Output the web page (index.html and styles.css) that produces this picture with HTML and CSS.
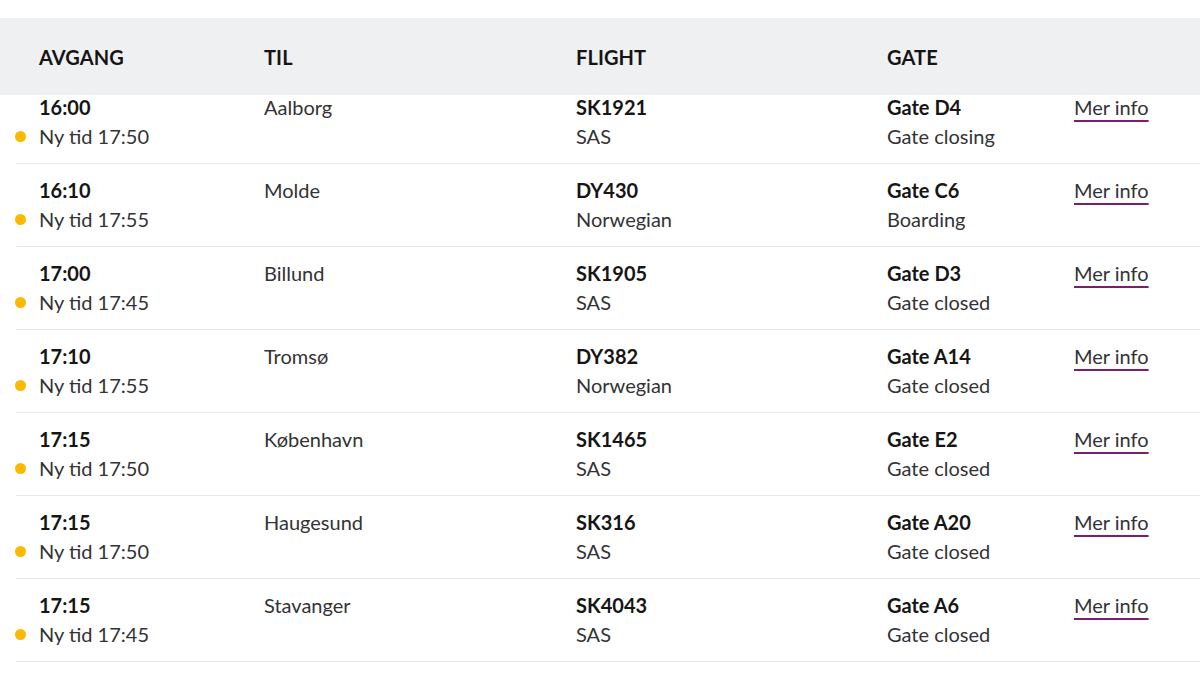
FILE: index.html
```html
<!DOCTYPE html>
<html lang="no">
<head>
<meta charset="utf-8">
<title>Avganger</title>
<link rel="stylesheet" href="styles.css">
</head>
<body>
<div class="board">
  <div class="head">
    <div>AVGANG</div>
    <div>TIL</div>
    <div>FLIGHT</div>
    <div>GATE</div>
    <div></div>
  </div>
  <div class="rows">
    <div class="row">
      <div><div class="b">16:00</div><div class="new"><span class="dot"></span>Ny tid 17:50</div></div>
      <div>Aalborg</div>
      <div><div class="b">SK1921</div><div>SAS</div></div>
      <div><div class="b">Gate D4</div><div>Gate closing</div></div>
      <div><a class="more" href="#">Mer info</a></div>
    </div>
    <div class="row">
      <div><div class="b">16:10</div><div class="new"><span class="dot"></span>Ny tid 17:55</div></div>
      <div>Molde</div>
      <div><div class="b">DY430</div><div>Norwegian</div></div>
      <div><div class="b">Gate C6</div><div>Boarding</div></div>
      <div><a class="more" href="#">Mer info</a></div>
    </div>
    <div class="row">
      <div><div class="b">17:00</div><div class="new"><span class="dot"></span>Ny tid 17:45</div></div>
      <div>Billund</div>
      <div><div class="b">SK1905</div><div>SAS</div></div>
      <div><div class="b">Gate D3</div><div>Gate closed</div></div>
      <div><a class="more" href="#">Mer info</a></div>
    </div>
    <div class="row">
      <div><div class="b">17:10</div><div class="new"><span class="dot"></span>Ny tid 17:55</div></div>
      <div>Tromsø</div>
      <div><div class="b">DY382</div><div>Norwegian</div></div>
      <div><div class="b">Gate A14</div><div>Gate closed</div></div>
      <div><a class="more" href="#">Mer info</a></div>
    </div>
    <div class="row">
      <div><div class="b">17:15</div><div class="new"><span class="dot"></span>Ny tid 17:50</div></div>
      <div>København</div>
      <div><div class="b">SK1465</div><div>SAS</div></div>
      <div><div class="b">Gate E2</div><div>Gate closed</div></div>
      <div><a class="more" href="#">Mer info</a></div>
    </div>
    <div class="row">
      <div><div class="b">17:15</div><div class="new"><span class="dot"></span>Ny tid 17:50</div></div>
      <div>Haugesund</div>
      <div><div class="b">SK316</div><div>SAS</div></div>
      <div><div class="b">Gate A20</div><div>Gate closed</div></div>
      <div><a class="more" href="#">Mer info</a></div>
    </div>
    <div class="row">
      <div><div class="b">17:15</div><div class="new"><span class="dot"></span>Ny tid 17:45</div></div>
      <div>Stavanger</div>
      <div><div class="b">SK4043</div><div>SAS</div></div>
      <div><div class="b">Gate A6</div><div>Gate closed</div></div>
      <div><a class="more" href="#">Mer info</a></div>
    </div>
  </div>
</div>
</body>
</html>
```
FILE: styles.css
```css
html, body {
  margin: 0;
  padding: 0;
  background: #ffffff;
}
body {
  font-family: Lato, "Open Sans", "Liberation Sans", sans-serif;
  font-size: 20px;
  color: #333335;
  overflow: hidden;
}
.board {
  padding-top: 18px;
}
.head,
.row {
  display: grid;
  grid-template-columns: 225px 312px 311px 187px 1fr;
}
.head {
  height: 77px;
  align-items: center;
  background: #eff0f2;
  padding-left: 39px;
  font-weight: 700;
  color: #151515;
  letter-spacing: 0.1px;
}
.rows {
  margin-left: 16px;
}
.row {
  padding: 12px 0 12px 23px;
  line-height: 29px;
  border-bottom: 1px solid #e8e8ea;
}
.row:first-child {
  padding-top: 0;
  padding-bottom: 12px;
  margin-top: -2px;
}
.b {
  font-weight: 700;
  color: #161616;
}
.new {
  display: flex;
  align-items: center;
  gap: 13px;
  margin-left: -24px;
}
.dot {
  width: 11px;
  height: 11px;
  border-radius: 50%;
  background: #fbb900;
  flex: none;
}
.more {
  color: #333335;
  text-decoration: underline;
  text-decoration-color: #7a1f6e;
  text-decoration-thickness: 2px;
  text-underline-offset: 5px;
}
```
